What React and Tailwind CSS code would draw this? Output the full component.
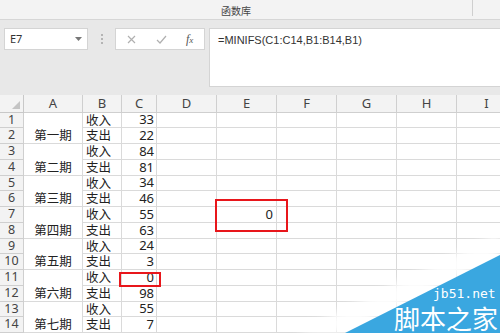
import React from "react";

const cols = ["A", "B", "C", "D", "E", "F", "G", "H", "I", "J"];
const periods = ["第一期", "第二期", "第三期", "第四期", "第五期", "第六期", "第七期"];
const vals = [33, 22, 84, 81, 34, 46, 55, 63, 24, 3, 0, 98, 55, 7];

export default function App() {
  const cells = [];
  cells.push(
    <div key="corner" className="relative bg-[#f3f3f3] border-r border-b border-[#c8c8c8]">
      <svg className="absolute right-[3px] bottom-[3px]" width="8" height="8" viewBox="0 0 8 8">
        <polygon points="8,0 8,8 0,8" fill="#c4c4c4" />
      </svg>
    </div>
  );
  cols.slice(0, 9).forEach((c) => {
    cells.push(
      <div key={"h" + c} className="bg-[#f3f3f3] border-r border-b border-[#cfcfcf] flex items-center justify-center text-[13px] text-[#444] leading-none">
        {c}
      </div>
    );
  });
  for (let r = 1; r <= 14; r++) {
    cells.push(
      <div key={"r" + r} className="bg-[#f3f3f3] border-r border-b border-[#cfcfcf] flex items-center justify-center text-[12.5px] text-[#444] leading-none">
        {r}
      </div>
    );
    if (r % 2 === 1) {
      cells.push(
        <div key={"a" + r} className="row-span-2 border-r border-b border-[#dadada] flex items-end justify-center pb-[1px] text-[12.5px] text-[#222] leading-[15px] font-['Noto_Sans_CJK_SC',sans-serif]">
          {periods[(r - 1) / 2]}
        </div>
      );
    }
    cells.push(
      <div key={"b" + r} className="border-r border-b border-[#dadada] flex items-center pl-[3px] text-[12.5px] text-[#222] leading-none font-['Noto_Sans_CJK_SC',sans-serif]">
        {r % 2 === 1 ? "收入" : "支出"}
      </div>
    );
    cells.push(
      <div key={"c" + r} className="border-r border-b border-[#dadada] flex items-center justify-end pr-[2px] text-[13px] text-[#222] leading-none">
        {vals[r - 1]}
      </div>
    );
    ["D", "E", "F", "G", "H", "I"].forEach((c) => {
      cells.push(
        <div key={c + r} className="border-r border-b border-[#dadada] flex items-center justify-end pr-[3px] text-[13px] text-[#222] leading-none">
          {c === "E" && r === 7 ? "0" : ""}
        </div>
      );
    });
  }

  return (
    <div className="relative w-[500px] h-[333px] overflow-hidden bg-[#e8e8e8] font-['Noto_Sans','Noto_Sans_CJK_SC',sans-serif]">
      <div className="h-[20px] bg-[#f3f3f3] border-b border-[#d6d6d6] relative flex items-center justify-center">
        <span className="text-[10px] text-[#444] ml-[-28px] mt-[1px] font-['Noto_Sans_CJK_SC',sans-serif]">函数库</span>
        <div className="absolute left-[472px] top-0 h-[16px] w-px bg-[#cfcfcf]" />
      </div>
      <div className="flex h-[67px] pt-[8px] pl-[4px] bg-[#e8e8e8]">
        <div className="w-[84px] h-[22px] bg-white border border-[#d4d4d4] flex items-center justify-between pl-[5px] pr-[5px]">
          <span className="text-[11px] text-[#333]">E7</span>
          <svg width="7" height="4" viewBox="0 0 7 4"><polygon points="0,0 7,0 3.5,4" fill="#777" /></svg>
        </div>
        <div className="w-[27px] h-[22px] flex flex-col items-center justify-center gap-[2px]">
          <div className="w-[2px] h-[2px] bg-[#b4b4b4]" />
          <div className="w-[2px] h-[2px] bg-[#b4b4b4]" />
          <div className="w-[2px] h-[2px] bg-[#b4b4b4]" />
        </div>
        <div className="w-[90px] h-[22px] bg-white border border-[#d4d4d4] flex items-center">
          <svg className="ml-[11px]" width="9" height="9" viewBox="0 0 9 9"><path d="M1 1 L8 8 M8 1 L1 8" stroke="#b0b0b0" strokeWidth="1.2" /></svg>
          <svg className="ml-[20px]" width="11" height="9" viewBox="0 0 11 9"><path d="M1 5 L4 8 L10 1" stroke="#b0b0b0" strokeWidth="1.2" fill="none" /></svg>
          <span className="ml-[19px] text-[12px] italic text-[#555] font-['Liberation_Serif',serif] leading-none">f<span className="text-[9px]">x</span></span>
        </div>
        <div className="ml-[4px] flex-1 h-[59px] bg-white border border-[#d4d4d4] border-r-0 pl-[8px] pt-[3px] text-[11px] text-[#333] font-['Liberation_Sans',sans-serif]">
          =MINIFS(C1:C14,B1:B14,B1)
        </div>
      </div>
      <div className="h-[8px] bg-[#e8e8e8]" />
      <div className="grid bg-white grid-cols-[24px_59px_39px_35px_60px_60px_60px_60px_60px_60px] grid-rows-[17.5px_repeat(14,15.75px)] w-[517px]">
        {cells}
      </div>
      <div className="absolute left-[215px] top-[199px] w-[73px] h-[33px] border-2 border-[#e8161b]" />
      <div className="absolute left-[119px] top-[272px] w-[42px] h-[15px] border-2 border-[#e8161b]" />
      <svg className="absolute left-0 top-0" width="500" height="333" viewBox="0 0 500 333">
        <defs>
          <filter id="blur" x="-20%" y="-20%" width="140%" height="140%">
            <feGaussianBlur stdDeviation="4" />
          </filter>
        </defs>
        <polygon points="295,333 500,232 500,256 345,333" fill="#ffffff" opacity="0.9" filter="url(#blur)" />
        <polygon points="345,333 500,255 500,333" fill="#3aa7e0" />
      </svg>
      <div className="absolute left-[433px] top-[288px] text-[13px] leading-[12px] text-white font-['DejaVu_Sans_Mono',monospace]">
        jb51.net
      </div>
      <div className="absolute left-[394px] top-[305px] text-[26px] leading-[26px] text-white font-['Noto_Sans_CJK_SC',sans-serif] whitespace-nowrap">
        脚本之家
      </div>
    </div>
  );
}
